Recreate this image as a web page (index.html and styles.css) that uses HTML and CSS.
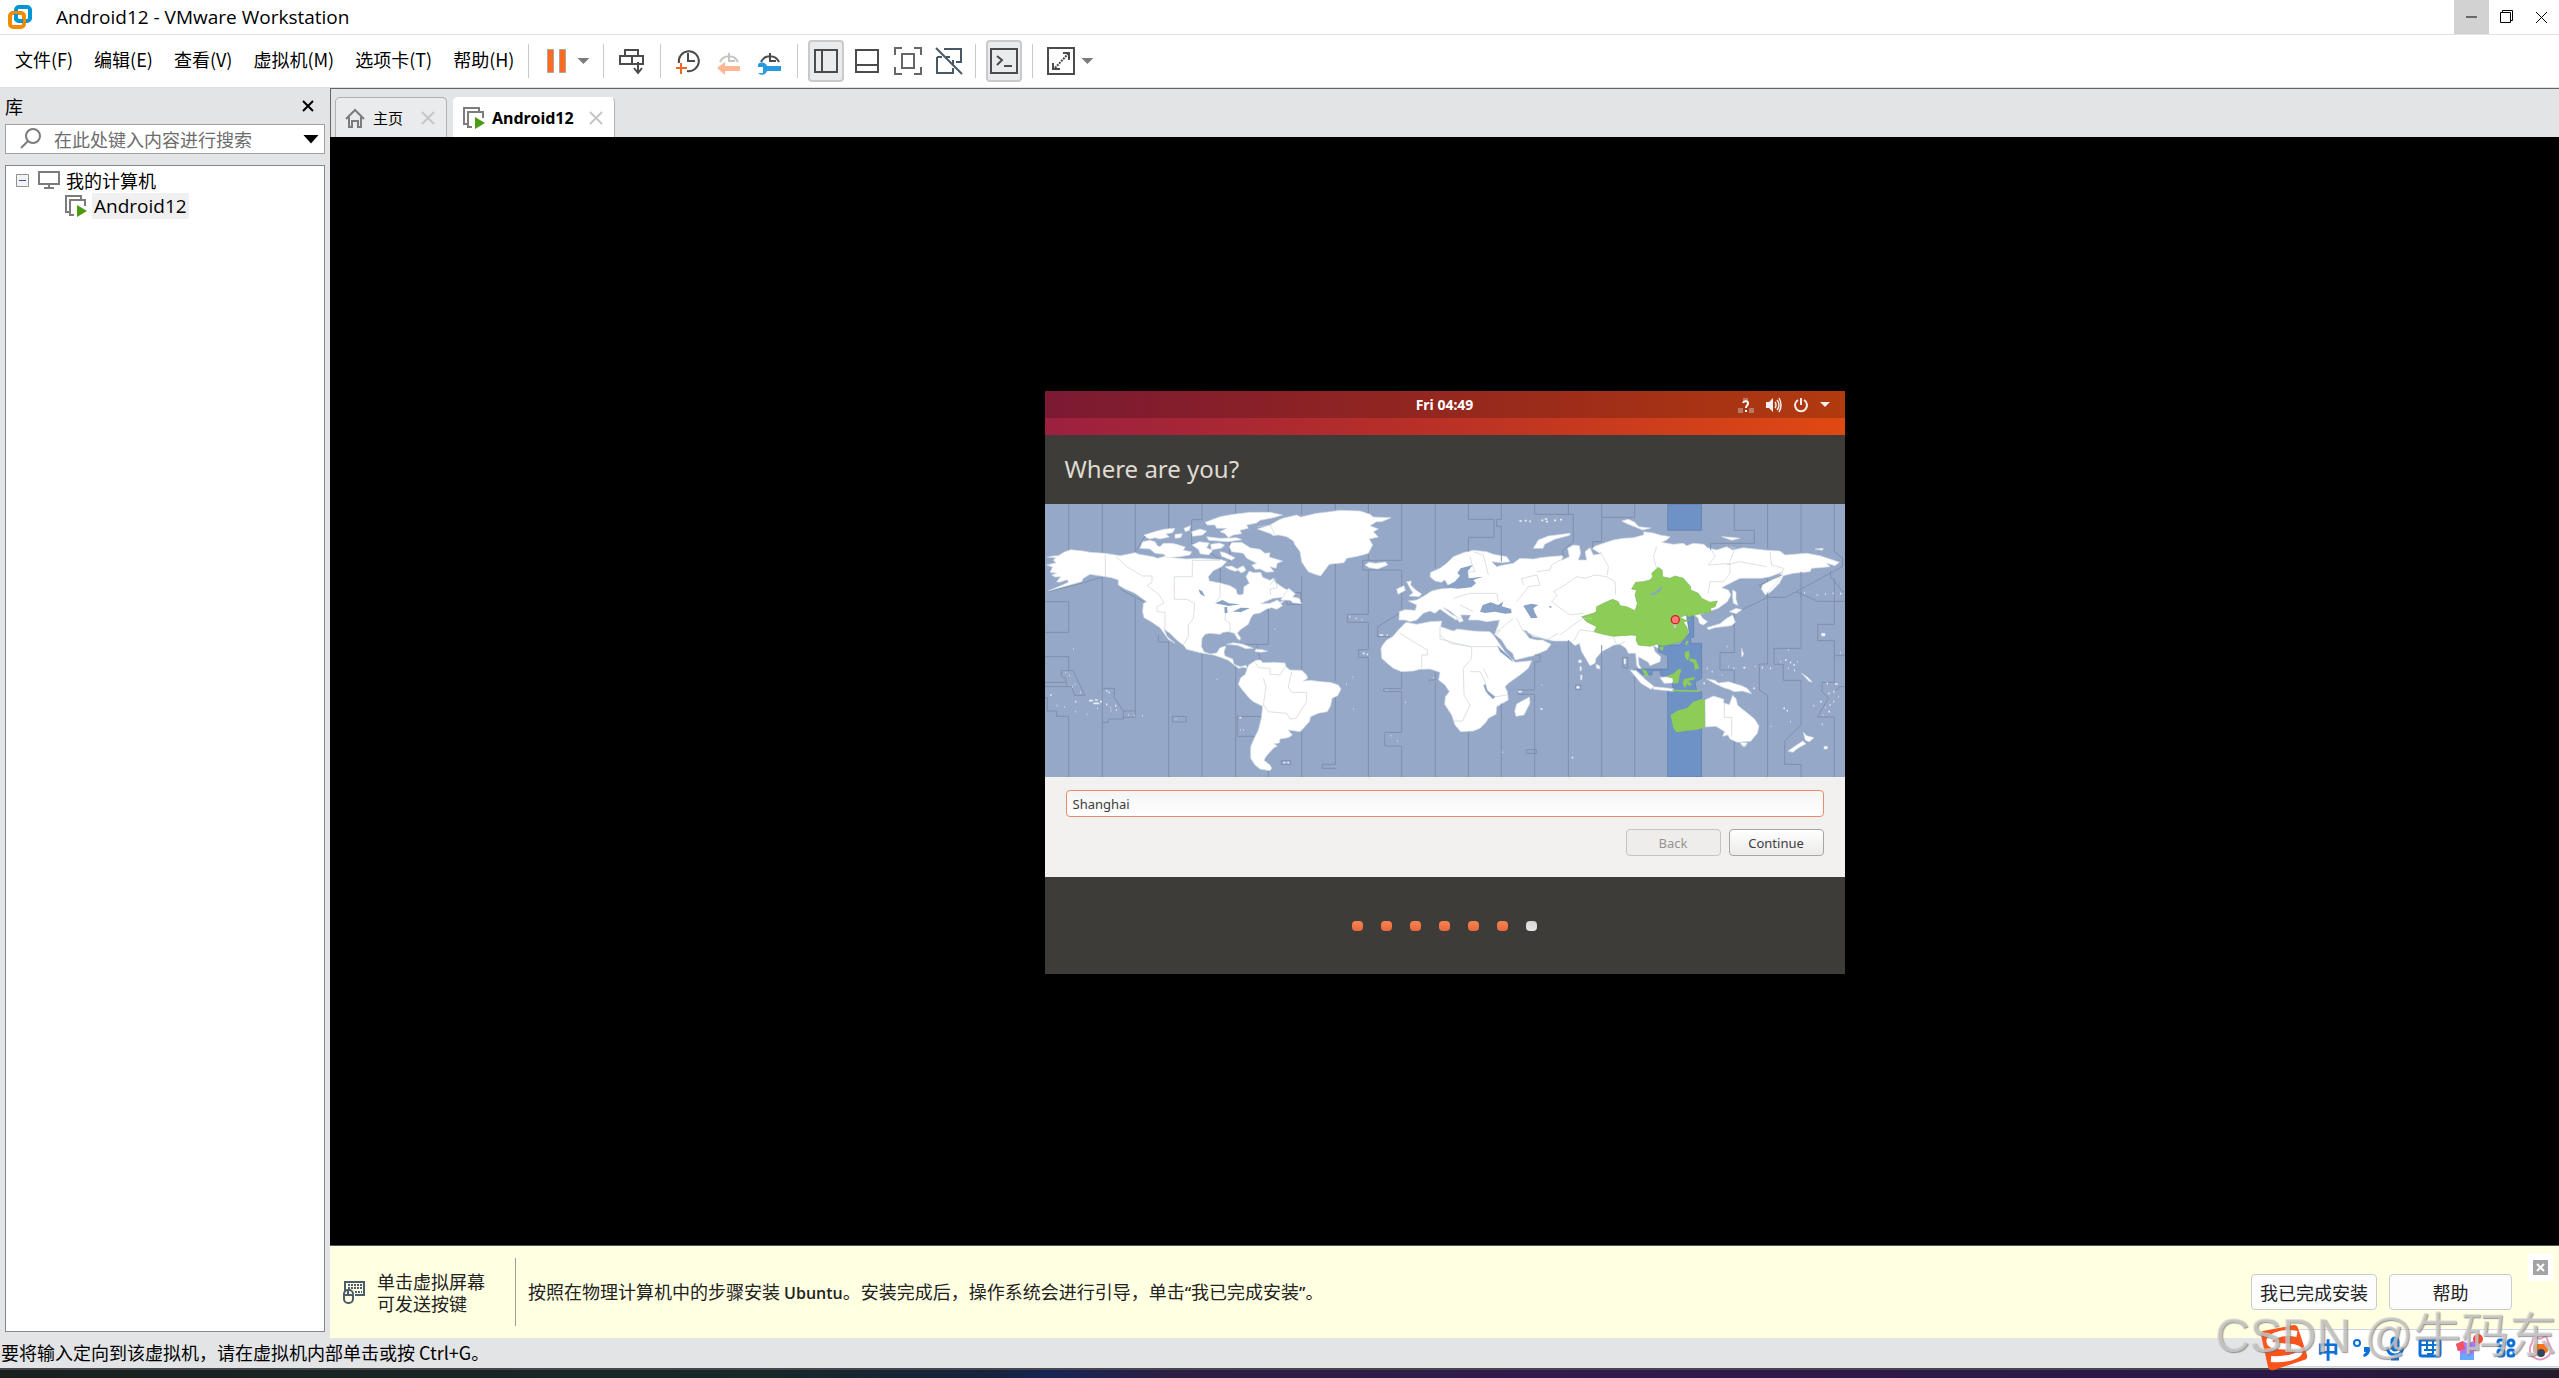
FILE: index.html
```html
<!DOCTYPE html>
<html lang="zh-CN">
<head>
    <meta charset="UTF-8">
    <meta name="viewport" content="width=device-width, initial-scale=1.0">
    <title>Android12 - VMware Workstation</title>
    <link rel="stylesheet" href="styles.css">
</head>
<body>
    <!-- 标题栏 -->
    <header class="title-bar">
        <svg class="app-logo" width="26" height="26" viewBox="0 0 26 26" fill="none" stroke-width="4">
            <rect x="9" y="3" width="14" height="14" rx="3" stroke="#0095d3"/>
            <rect x="3" y="9" width="14" height="14" rx="3" stroke="#f38b00"/>
            <path d="M9 10v4a3 3 0 0 0 3 3h4" stroke="#0095d3"/>
        </svg>
        <h1 class="app-title">Android12 - VMware Workstation</h1>
        <div class="window-controls">
            <button type="button" class="window-btn active" aria-label="最小化">
                <svg width="14" height="14" viewBox="0 0 14 14"><path d="M1 7h11" stroke="#000"/></svg>
            </button>
            <button type="button" class="window-btn" aria-label="还原">
                <svg width="14" height="14" viewBox="0 0 14 14" fill="none" stroke="#000"><path d="M.5 2.500h10v10H.5zM2.500 2.500V.5h10v10h-2"/></svg>
            </button>
            <button type="button" class="window-btn" aria-label="关闭">
                <svg width="14" height="14" viewBox="0 0 14 14"><path d="M1 2l11 11M12 2L1 13" stroke="#000"/></svg>
            </button>
        </div>
    </header>

    <!-- 菜单和工具栏 -->
    <nav class="menu-bar">
        <div class="menus">
            <button type="button">文件(F)</button>
            <button type="button">编辑(E)</button>
            <button type="button">查看(V)</button>
            <button type="button">虚拟机(M)</button>
            <button type="button">选项卡(T)</button>
            <button type="button">帮助(H)</button>
        </div>
        <div class="tool-group">
            <button type="button" class="tool" aria-label="挂起">
                <svg width="28" height="28" viewBox="0 0 28 28" fill="#ff6a1f" stroke="#b0a49c"><path d="M4.500 2.500h6v23h-6zM16.500 2.500h6v23h-6z"/></svg>
            </button>
            <button type="button" class="caret" aria-label="电源选项"></button>
        </div>
        <div class="tool-group">
            <button type="button" class="tool" aria-label="发送按键">
                <svg width="28" height="28" viewBox="0 0 28 28" fill="none" stroke="#4b4b4d" stroke-width="2"><path d="M7 9V3h13v6M2 9h23v8H2zM14 9v8M20 15v10M16 21l4 5 4-5"/></svg>
            </button>
        </div>
        <div class="tool-group snapshots">
            <button type="button" class="tool" aria-label="拍摄快照">
                <svg width="28" height="28" viewBox="0 0 28 28" fill="none" stroke="#4b4b4d" stroke-width="2"><path d="M5 16A10 10 0 1 1 13 24M14 6v8h7"/><path d="M2 21h11M7 16v11" stroke="#f26722"/></svg>
            </button>
            <button type="button" class="tool" aria-label="恢复快照" disabled>
                <svg width="28" height="28" viewBox="0 0 28 28" fill="none" stroke="#c4c4c5" stroke-width="2"><path d="M5 15A10 10 0 0 1 23 15M14 6v8h6"/><path d="M2 21l8-6v4h15v5H10v4z" fill="#ffb693" stroke="none"/></svg>
            </button>
            <button type="button" class="tool" aria-label="管理快照">
                <svg width="28" height="28" viewBox="0 0 28 28" fill="none" stroke="#4b4b4d" stroke-width="2"><path d="M5 15A10 10 0 0 1 23 15M14 6v8h6"/><path d="M2 17c4-3 8-1 9 2h14v5H11c-1 4-6 5-9 2h5v-6H2z" fill="#2a9ae0" stroke="none"/></svg>
            </button>
        </div>
        <div class="tool-group views">
            <button type="button" class="tool pressed" aria-label="显示库">
                <svg width="28" height="28" viewBox="0 0 28 28" fill="none" stroke="#4b4b4d" stroke-width="2"><path d="M3 3h22v22H3zM10 3v22"/></svg>
            </button>
            <button type="button" class="tool" aria-label="显示缩略图">
                <svg width="28" height="28" viewBox="0 0 28 28" fill="none" stroke="#4b4b4d" stroke-width="2"><path d="M3 3h22v22H3zM3 18h22"/></svg>
            </button>
            <button type="button" class="tool" aria-label="全屏">
                <svg width="28" height="28" viewBox="0 0 28 28" fill="none" stroke="#666" stroke-width="2"><path d="M8 7h12v14H8zM1 8V1h7M20 1h7v7M27 20v7h-7M8 27H1v-7"/></svg>
            </button>
            <button type="button" class="tool" aria-label="Unity 模式">
                <svg width="28" height="28" viewBox="0 0 28 28" fill="none" stroke="#485866" stroke-width="2"><path d="M9 2h17v13h-5M15 10h-4M2 10v16h16v-5M2 10h5M18 18v-5"/><path d="M1 1l26 26"/></svg>
            </button>
        </div>
        <div class="tool-group">
            <button type="button" class="tool pressed" aria-label="控制台视图">
                <svg width="28" height="28" viewBox="0 0 28 28" fill="none" stroke="#4b4b4d" stroke-width="2"><path d="M1 2h26v24H1zM7 9l5 4-5 5M14 19h8"/></svg>
            </button>
        </div>
        <div class="tool-group">
            <button type="button" class="tool" aria-label="自由拉伸">
                <svg width="28" height="28" viewBox="0 0 28 28" fill="none" stroke="#4b4b4d" stroke-width="2"><path d="M1 1h26v26H1zM16 6h6v7M6 16v6h7"/><path d="M8 21L21 7" stroke-dasharray="2 1"/></svg>
            </button>
            <button type="button" class="caret" aria-label="拉伸选项"></button>
        </div>
    </nav>

    <div class="workspace">
        <!-- 库 -->
        <aside class="library">
            <div class="library-head">
                <h2>库</h2>
                <button type="button" class="plain-btn" aria-label="关闭库">
                    <svg width="12" height="12" viewBox="0 0 12 12"><path d="M1 1l10 10M11 1L1 11" stroke="#000" stroke-width="2"/></svg>
                </button>
            </div>
            <div class="search-box">
                <svg width="24" height="22" viewBox="0 0 24 22" fill="none" stroke="#7c7c7c" stroke-width="2"><circle cx="14" cy="8" r="7"/><path d="M9 13l-7 7"/></svg>
                <input type="text" placeholder="在此处键入内容进行搜索" aria-label="搜索库">
                <button type="button" class="search-caret" aria-label="搜索选项"></button>
            </div>
            <div class="tree-box">
                <ul class="tree">
                    <li>
                        <div class="tree-row">
                            <svg width="13" height="13" viewBox="0 0 13 13" fill="#f3f3f3" stroke="#919191"><path d="M.5.5h12v12H.5z"/><path d="M3 6.500h7" stroke="#3455a5"/></svg>
                            <svg class="pc-icon" width="22" height="18" viewBox="0 0 22 18" fill="none" stroke="#7c7c7c" stroke-width="2"><path d="M1 1h20v12H1zM11 13v4M6 17h10"/></svg>
                            <span>我的计算机</span>
                        </div>
                        <ul>
                            <li class="tree-row vm-row">
                                <svg width="22" height="22" viewBox="0 0 22 22" fill="none" stroke="#7c7c7c" stroke-width="2"><path d="M4 17H1V1h15v3M9 20H5V5h15v6"/><path d="M12 10l10 6-10 6z" fill="#4a9b12" stroke="none"/></svg>
                                <span class="vm-name">Android12</span>
                            </li>
                        </ul>
                    </li>
                </ul>
            </div>
        </aside>

        <main class="vm-area">
            <div class="tabs" role="tablist">
                <div class="tab">
                    <svg width="20" height="20" viewBox="0 0 20 20" fill="none" stroke="#7c7c7c" stroke-width="2"><path d="M1 11l9-9 9 9M4 9v10h3v-6h6v6h3V9"/></svg>
                    <span role="tab">主页</span>
                    <button type="button" class="plain-btn" aria-label="关闭主页">
                        <svg width="14" height="14" viewBox="0 0 14 14"><path d="M1 1l12 12M13 1L1 13" stroke="#c6c6c6" stroke-width="2"/></svg>
                    </button>
                </div>
                <div class="tab current">
                    <svg width="22" height="22" viewBox="0 0 22 22" fill="none" stroke="#7c7c7c" stroke-width="2"><path d="M4 17H1V1h15v3M9 20H5V5h15v6"/><path d="M12 10l10 6-10 6z" fill="#4a9b12" stroke="none"/></svg>
                    <span role="tab">Android12</span>
                    <button type="button" class="plain-btn" aria-label="关闭 Android12">
                        <svg width="14" height="14" viewBox="0 0 14 14"><path d="M1 1l12 12M13 1L1 13" stroke="#c6c6c6" stroke-width="2"/></svg>
                    </button>
                </div>
            </div>

            <!-- 虚拟机屏幕 -->
            <div class="screen">
                <section class="guest">
                    <div class="guest-wall">
                        <div class="guest-panel">
                            <span class="clock">Fri 04:49</span>
                            <div class="indicators">
                                <svg width="18" height="18" viewBox="0 0 18 18"><path d="M6 2h5v3H6zM1 12h5v5H1zM12 12h5v5h-5z" fill="#b87a66"/><path d="M6 7c1-3 6-2 5 1-1 2-2 2-2 4M9 14v2" fill="none" stroke="#fff" stroke-width="2"/></svg>
                                <svg width="16" height="16" viewBox="0 0 16 16" fill="none" stroke="#f2f0ee" stroke-width="2"><path d="M0 5h3l4-4v14l-4-4H0z" fill="#f2f0ee" stroke="none"/><path d="M9 5q2 3 0 6M11 3q4 5 0 10M13 1q4 7 0 14" stroke-width="1.500"/></svg>
                                <svg width="16" height="16" viewBox="0 0 16 16" fill="none" stroke="#f2f0ee" stroke-width="2"><path d="M5 3a6 6 0 1 0 6 0M8 1v7"/></svg>
                                <svg width="10" height="6" viewBox="0 0 10 6"><path d="M0 0h10L5 5z" fill="#f2f0ee"/></svg>
                            </div>
                        </div>
                    </div>
                    <h2 class="guest-title"><label for="city">Where are you?</label></h2>

                    <!-- 时区地图 -->
                    <svg class="map" viewBox="0 0 2400 819" role="img" aria-label="时区地图">
                        <path fill="#95a8c8" d="M0 0h2400v819H0z"/>
                        <g transform="translate(-15 -357)">
                            <g class="zone-lines">
                                <path d="M86 357V500M86 650V742M86 815V856M86 994V1176M187 357V505M187 575V910M187 1012V1176M286 357V500L318 448 386 430V357M286 640V978H250M386 770V1176M386 430V357M486 357V404H455V475L541 522V600M486 805V1176M569 390V530M587 357V390M587 845V1176M685 357V382M685 670V778H565M685 1155V1176M785 357V388M785 573V860M785 1040V1176M886 357V376M886 530V888M886 930V1138H847V1150H890M985 357V390M985 505V526H968V555H1085V680M985 555V688H922V712H985V794H956V817H985V1176M1085 357V526H985M1085 860V911H1031V920H1085V1042H1034V1083H1085V1176M1186 357V550M1186 862V885H1168V889M1186 889V1176"/>
                                <path d="M15 650H86M15 742H86M15 815H86M64 857H99L135 931H104L95 905 80 905 77 880 64 874zM15 892H80M15 905H80M15 938H22V978H50V994H86M187 910H223V938L250 978V1002H205V1012H187V910M250 997H286V978M397 994H439V1011H397zM25 620L120 596 195 574M242 613L320 655M355 750V771H386M592 994H664M592 994V1054H645M724 1127H752V1138H724zM1013 725L1085 681M1013 725V755H1050M740 640V658H783V623H765M650 778L661 825"/>
                            </g>
                            <g class="land">
                                <!-- 北美洲 -->
                                <path d="M20 540L48 533 40 526 47 518 22 517 38 513 55 512 73 501 92 494 108 496 130 498 150 502 195 505 240 512 256 509 285 503 297 508 340 515 352 520 380 512 400 518 440 522 480 520 545 524 560 530 545 545 520 557 505 575 508 588 540 594 570 602 588 613 592 628 600 630 610 627 612 605 628 595 618 575 628 558 640 563 662 562 668 577 690 586 700 580 706 592 722 603 735 612 750 615 762 630 740 636 700 640 680 648 662 656 690 655 712 645 720 652 735 643 722 657 728 662 710 673 695 668 680 672 660 684 640 688 632 700 625 718 600 735 592 745 602 758 600 766 593 762 583 745 565 740 550 742 540 748 510 745 495 748 486 760 484 784 492 800 510 807 530 804 540 788 558 783 552 800 555 813 578 822 582 838 600 845 618 841 622 850 610 847 596 850 580 838 565 826 550 820 520 810 480 803 440 793 432 782 410 765 388 743 372 733 382 755 405 775 385 763 360 728 330 708 312 698 308 680 310 655 320 650 295 632 285 625 255 612 235 600 235 585 215 578 195 575 150 568 130 580 125 590 100 597 60 608 25 618 60 603 85 592 82 584 58 592 50 590 62 575 45 576 35 570 50 565 30 562 38 547z"/>
                                <path d="M300 490L308 470 330 466 345 470 352 482 360 485 370 475 395 475 410 478 436 486 430 496 455 500 450 510 420 515 380 518 372 508 345 505 330 492zM312 450L350 438 375 432 405 430 398 443 378 446 388 456 360 462 345 458 330 462 320 458zM405 448l22-2-5 12-17 2zM432 430l20-8-4 14-12 4zM455 440l25-8 20 6-12 12-30 4zM495 412L540 395 580 388 630 382 690 382 728 390 700 398 660 406 650 414 620 420 625 430 600 436 605 446 580 450 565 458 555 446 540 440 560 430 530 430 525 420 502 420zM456 480l22-10 30 4-8 14 18 8-12 14-26-4-4-12zM512 478l26-4 16 6-10 10-30 4zM500 455l40 5 50-2 16 6-40 6-60-4zM568 485L575 473 605 472 630 488 660 493 675 505 690 503 688 516 728 528 712 535 708 550 690 545 702 560 680 562 660 552 645 553 635 540 650 535 620 520 610 505 575 500zM555 545l20-2 22 12-12 4-18-6zM590 552l20-10 8 14-14 8zM540 500l15 3 30 15-10 8-30-12z"/>
                                <path d="M652 432L690 420 716 405 728 400 770 390 782 396 830 385 870 380 900 376 960 378 990 388 1000 396 1053 398 1025 410 1010 410 990 422 1015 432 1000 440 1015 456 988 462 998 480 985 505 960 512 930 518 920 520 912 533 868 538 855 555 842 573 825 568 805 560 795 546 785 530 780 500 765 480 760 468 740 455 715 450 700 452 692 446 675 440z"/>
                                <path d="M975 540l12-8 20 3 30-4 6 9-30 12-25-4zM560 778l20-5 30 5 30 12-22 1-25-10zM648 792l20 2 15 5-20 3-18-2zM722 645l24-35 20 16-8 10 20 4 6 16-25-3-8-7z"/>
                                <!-- 南美洲 -->
                                <path d="M622 850L626 840 648 826 662 825 668 833 700 832 735 834 738 845 750 855 785 856 800 870 803 880 790 888 810 886 845 890 870 892 895 900 903 912 893 932 876 940 872 962 862 980 835 985 812 995 808 1010 790 1030 780 1040 745 1035 757 1050 745 1058 720 1062 718 1074 702 1076 712 1083 700 1090 688 1103 678 1115 672 1126 690 1140 695 1150 690 1157 660 1152 645 1140 632 1120 632 1085 645 1055 655 1035 664 1000 668 964 640 950 628 940 605 912 595 898 602 878 616 868z"/>
                                <!-- 非洲 -->
                                <path d="M1098 712L1130 718 1170 710 1205 708 1202 725 1240 738 1252 732 1300 738 1350 740 1360 750 1395 800 1418 824 1425 832 1475 827 1465 850 1440 870 1405 895 1395 905 1402 920 1405 945 1370 965 1368 988 1345 1000 1338 1012 1320 1030 1300 1038 1262 1040 1245 1020 1235 990 1214 958 1216 935 1228 920 1215 900 1196 885 1200 862 1170 852 1140 853 1120 858 1085 860 1060 850 1045 838 1025 820 1023 790 1028 780 1040 765 1058 755 1075 735z"/>
                                <!-- 欧亚大陆 -->
                                <path d="M1078 680L1095 674 1126 676 1130 660 1105 648 1130 645 1152 633 1175 618 1200 612 1240 608 1275 606 1255 590 1235 600 1225 602 1215 585 1205 592 1185 588 1170 575 1172 562 1200 550 1220 535 1240 515 1270 503 1300 496 1340 500 1360 508 1400 515 1410 530 1385 533 1355 530 1370 545 1390 540 1420 535 1440 520 1480 522 1500 518 1540 514 1570 512 1565 526 1588 515 1583 490 1600 480 1618 482 1622 505 1615 525 1640 525 1635 500 1650 488 1660 510 1682 506 1655 490 1668 482 1690 475 1720 465 1750 460 1780 458 1810 450 1812 440 1840 444 1860 450 1890 455 1880 465 1865 472 1900 478 1930 475 1940 482 1960 475 1992 478 2002 488 2030 495 2060 485 2078 495 2110 488 2180 496 2220 498 2235 510 2300 505 2340 512 2370 522 2398 532 2385 542 2360 535 2370 545 2340 548 2315 550 2310 560 2260 565 2230 572 2218 595 2195 618 2178 630 2170 605 2180 590 2218 572 2225 562 2190 575 2165 580 2100 580 2060 600 2045 608 2065 615 2073 630 2062 650 2035 670 2010 678 1980 688 1988 700 2003 710 1990 720 1978 715 1975 700 1962 690 1940 695 1948 740 1925 765 1870 783 1855 790 1840 782 1845 800 1862 815 1860 830 1830 842 1825 832 1795 815 1797 840 1810 858 1825 870 1812 872 1798 855 1790 840 1787 805 1765 805 1758 790 1740 778 1722 780 1685 800 1668 820 1665 835 1650 842 1640 825 1625 800 1618 775 1605 782 1590 768 1540 768 1500 758 1480 755 1460 738 1450 735 1468 760 1490 765 1508 765 1533 778 1520 795 1480 812 1425 825 1418 805 1400 790 1385 765 1364 748 1375 720 1378 705 1340 710 1315 705 1285 705 1292 690 1262 690 1270 708 1258 712 1245 690 1225 675 1210 668 1235 688 1262 700 1248 705 1225 690 1200 672 1185 685 1170 678 1150 685 1130 705 1110 710 1095 705 1077 705z"/>
                                <path d="M1100 590l14-2-2 12 15 15 18 12-8 8-30-2 12-10-8-12zM1070 612l22-10 4 14-22 12z"/>
                            </g>
                            <g class="water">
                                <path d="M475 613l12 6 8 16-14-8zM525 655l22-10 20 10 34 3-35 5zM553 667l8-2 2 18-9 2zM578 680l24-12 28 1-26 12z"/>
                            </g>
                            <path class="borders" d="M196 507V575M228 515L260 545 308 573H336V592L322 602 358 630 372 655 350 665 352 680 375 682V740M541 526H457V575H403V643H440L464 655 460 700 445 720V755L430 780M540 598V635L528 650M557 685L555 705 570 715V740M690 600L705 580 712 608 690 612 692 630M645 832L655 848 690 850 690 868 720 870 735 845M670 880L678 905 670 960 685 980 740 985 750 1002 768 1000 800 950V922H755L745 905 755 860M1080 745L1162 795V810H1145V850M1200 725V762L1290 785H1380M1295 785V820L1270 850 1272 930 1290 960 1268 1008H1240M1290 860H1320L1335 890 1345 930 1370 935 1400 930M1330 850L1345 880M652 425L690 420 705 450"/>
                        </g>
                        <g transform="translate(1185 -357)">
                            <g class="zone-lines">
                                <path d="M85 357V403H162V457H85V500M184 357V403H170V424H184V530M284 357V388H400V470L368 497 370 515M385 357V388M485 357V397H584V357M485 397V470H458V490M85 1040V1176M184 955V1176M284 810H300V830H284V915H235V928H284V1176M385 765V1176M485 780V1176M584 850V1176M548 817H563V850L548 846zM883 357V436H943V475H812V495M983 357V490M983 580V837H958V915L983 932V1176M1083 357V500M1083 560V640M1183 357V500L1208 520 1207 545 1037 637H983L958 600 1025 570M1183 580V718H1133V767H1183V812H1215M883 685L983 637M883 680V803H840V855H883V905M883 1060V1176M1083 620V790H1002V838H1030V886H1083V1020L1034 1068V1138H1083V1176M1068 620L1133 649H1215M1172 557V575L1210 622M1183 812V892H1146V920L1165 940 1132 996H1183V1176M1183 920L1200 905H1215M260 1094H289V1105H260zM407 900H422V914H407z"/>
                            </g>
                            <path fill="#6e91c6" stroke="#5f7ba8" stroke-width="2" d="M683 357H785V436H683zM740 690H761V757H752V775H785V880L765 890 770 920H785V1176H683V915L700 908 690 880 662 870V857H636V870H610L590 852H683V812L656 800V780H720L748 745z"/>
                            <g class="land">
                                <path d="M280 490l15-25 30-12 65-8-1 6-45 12-30 15-5 12zM545 408l20-5 18 8 14 14 36 4-25 6-50-20zM845 455l30 2 25 3-25 6zM968 600l-4 12 12 18 12-14 35-40-25 8zM878 615l10 6v22l6 18-14-6-2-20zM868 680l20-10 18 4-18 12zM878 690l8 22-12 10-50 6-18 6-6-6 40-12 20-16zM1125 492l25-2-3 6z"/>
                                <!-- 南亚和大洋洲 -->
                                <path d="M570 855l18 2 30 28 25 20-10 8-30-18zM640 905l20 2 40 4v8l-60-6zM660 878l22-3 20 5-5 14-25 1zM800 882l25 4 10 8 30-4 40 12 16 8 14 16-28-8-26 2-10-6-20-6-26-12zM795 945l25-12 32 10-2 10 18 6 10-28 10 10 5 20 25 20 25 20 14 22-5 22-20 24-40 3-22-10-6-12-16 4 6-14-26-16-32 2zM900 1072l22 2-6 10h-8zM1090 1042l10 10 22 6-14 12-12-4zM1088 1068l10 8-22 12-18 14-14-4zM268 936l2 18-18 36-24 4-4-15 6-22zM468 838l10 4 2 10-10-2z"/>
                                <path d="M416 825h8v8h-8zM420 845h4v12h-4zM422 870h4v14h-4zM410 904h8v6h-8zM552 822h5v14h-5zM905 790l6 18-6 8zM1085 865l18 12 14 14-10-2zM1145 745h10v8h-10zM1152 1084h10v8h-10zM235 918h10v4h-10zM302 970h5v4h-5z"/>
                            </g>
                            <path fill="#8ccd57" stroke="#7fb65c" stroke-width="2" d="M425 695L450 688 468 682 470 665 490 655 518 643 535 650 540 662 560 665 585 677 592 655 585 630 590 615 575 612 587 592 610 590 630 585 638 575 635 565 655 547 667 556 667 575 690 580 705 573 730 580 752 605 752 615 775 625 785 640 810 652 832 648 825 665 812 670 812 682 790 684 745 695 740 690 720 697 735 705 750 704 730 712 740 725 745 740 735 760 715 772 690 778 668 783 650 778 630 784 595 780 588 765 590 752 575 750 545 752 520 754 490 748 462 740 470 725 440 710z"/>
                            <path fill="#8ccd57" d="M660 785l12 2-5 10-8-4zM738 768l8 0-6 14-4-4zM735 800l12-2 2 15-6 14-8-10zM748 820l20 4 10 26-14 4-2-20-14-6zM604 852l14 4 10 20-12-4zM675 875l24-8 18-16 8 4-6 14-4 25-14 2-4-16zM732 882l34-6-4 8-18 4 12 10-8 6-6-8-8 14-6-16zM695 914l84 2v5l-80-2zM692 990L710 978 742 968 760 950 785 942 794 946V1028L765 1035 735 1038 710 1042 700 1030z"/>
                            <g class="water">
                                <path d="M120 680l8-20 24-8 22 8 16-10-5 14 28 8 2 12-20 2-30-6-30 4zM250 662l25-6 20 4-15 10 5 14 8 14-20 2-12-20zM8 584l12 18 24-12 16-18-8-8 10-14 36-10-14 18 2 22 44-5-30 10 8 10-14 12-40 4-42-4zM628 628l22-10 16-14-2 12-24 14zM180 800l-8-18 40 36 8 14zM325 664l10 0-2 6zM130 900l6-2 6 18 24 20-8 6-20-22z"/>
                            </g>
                            <path class="borders" d="M90 515L95 535 105 560 80 562M100 500L130 510 138 540 145 570M40 640L90 625H170L175 650M60 660L100 680M250 600L245 580 290 570 300 600 265 605 250 625 230 650M290 560L330 555 335 540 370 520M340 620L375 600 410 575 435 580 465 570 500 575 525 590 527 630M480 500L505 545 502 570M340 620L352 630 335 650 355 665 390 690 430 685M360 750L400 720 430 700 455 700M400 770L420 735 465 740M230 700L250 740 320 765 355 745M520 755L530 780 555 770M650 485L640 515 650 550M815 495L825 515 805 540 870 535V565L850 590 810 590 805 625M870 485L885 490 870 530M990 500L995 540 1030 550 1025 575M860 540L900 530 980 545M853 950V997H875V1055M165 745L220 700M170 750L180 735M0 750L30 775 90 785"/>
                            <g class="islands">
                                <path d="M845 870h2M865 845h2M880 850h3M910 848h6M945 845h2M965 848h4M990 850h3M1020 830h2M1035 825h5M1050 832h4M1045 850h2M1060 840h5M1062 856h3M1072 830h2M1045 795h2M1200 803h2M1160 895h4M1185 897h8M1165 925h4M1120 962h3M1140 950h5M1155 968h2M1165 980h5M1148 990h2M1180 920h4M1195 935h2M1145 1018h3M1050 1010h2M1092 624h3M1130 630h3M1155 627h3M1178 625h3M1200 626h4M800 850h3M815 860h3M790 895h5M940 910h5M1030 970h5M1040 977h4M992 1024h2M395 1118h5M187 1102h2M305 900h2M1180 950h3M1168 960h4M860 785h2M238 408h8M254 407h6M268 409h5M304 406h6M314 402h8M318 410h6M342 406h6M360 404h6"/>
                            </g>
                        </g>
                        <g class="islands" transform="translate(-15 -357)">
                            <path d="M75 862h2M88 872h2M104 898h2M97 905h2M120 922h2M198 918h4M205 922h4M30 930h5M50 962h2M72 966h2M105 950h4M105 980h2M140 988h2M147 947h12M165 945h8M160 955h18M180 950h6M172 970h2M198 958h4M210 968h2M225 962h4M228 975h3M212 977h2M265 990h2M282 992h2M306 992h2M407 1003h2M530 883h2M704 732h2M100 792h2M928 695h3M947 700h3M965 704h2M968 805h6M980 808h4M1018 750h12M1040 750h4M938 876h2M918 898h2M940 972h2M1095 952h2M1040 915h2M1052 1052h2M1071 1068h2M598 998h6M600 1035h2M610 1035h2M730 1133h6M742 1133h6M1180 878h2"/>
                        </g>
                        <path d="M1890 352v20" stroke="#c9c9c9" stroke-width="7"/>
                        <circle cx="1891" cy="347" r="12" fill="#ff7b7b" stroke="#cf1f1f" stroke-width="4"/>
                    </svg>

                    <form class="guest-form">
                        <input type="text" id="city" value="Shanghai">
                        <div class="guest-actions">
                            <button type="button" disabled>Back</button>
                            <button type="button">Continue</button>
                        </div>
                    </form>
                    <div class="steps">
                        <i></i><i></i><i></i><i></i><i></i><i></i><i class="last"></i>
                    </div>
                </section>
            </div>

            <!-- 安装提示 -->
            <div class="hint-bar">
                <svg width="24" height="24" viewBox="0 0 24 24" fill="none" stroke="#4c5d6b" stroke-width="2"><path d="M3 11V2h19v13h-9"/><path d="M6 5h14M6 8h14M13 12h7" stroke-dasharray="2 1"/><rect x="2" y="10" width="9" height="13" rx="4" fill="#ffffe1"/><path d="M2 15h9M6 10v5"/></svg>
                <p class="hint-keys">单击虚拟屏幕<br>可发送按键</p>
                <p class="hint-text">按照在物理计算机中的步骤安装 <b>Ubuntu</b>。安装完成后，操作系统会进行引导，单击<b>“</b>我已完成安装<b>”</b>。</p>
                <div class="hint-actions">
                    <button type="button">我已完成安装</button>
                    <button type="button">帮助</button>
                </div>
                <button type="button" class="hint-close" aria-label="关闭提示">
                    <svg width="15" height="15" viewBox="0 0 15 15"><rect width="15" height="15" rx="1" fill="#a3a3a3"/><path d="M4 4l7 7M11 4l-7 7" stroke="#fff" stroke-width="2"/></svg>
                </button>
            </div>
        </main>
    </div>

    <footer class="status-bar">要将输入定向到该虚拟机，请在虚拟机内部单击或按 Ctrl+G。</footer>
    <div class="taskbar-edge"></div>

    <!-- 输入法工具条 -->
    <div class="ime-bar">
        <svg class="ime-logo" width="48" height="46" viewBox="0 0 48 46"><path d="M1 10Q0 7 3 6L34 0q3 0 4 3l9 27q1 4-3 5L14 45q-5 1-6-3z" fill="#f9541c"/><path d="M37 9C22 6 6 12 10 18s26 1 29 7-12 10-28 9" fill="none" stroke="#fff" stroke-width="6"/></svg>
        <span class="ime-mode">中</span>
        <svg width="20" height="20" viewBox="0 0 20 20" fill="none" stroke="#0b6fd8" stroke-width="2"><circle cx="5" cy="5" r="3"/><path d="M12 9h6q1 8-6 10l-1-2 3-3h-2z" fill="#0b6fd8" stroke="none"/></svg>
        <svg width="20" height="26" viewBox="0 0 20 26" fill="none" stroke="#0b6fd8" stroke-width="3"><rect x="7" y="3" width="6" height="12" rx="3" fill="#0b6fd8"/><path d="M2 12q1 8 8 8t8-8M6 24h8"/></svg>
        <svg width="24" height="20" viewBox="0 0 24 20" fill="none" stroke="#0b6fd8" stroke-width="2"><rect x="2" y="2" width="20" height="16" rx="2" stroke-width="3"/><path d="M2 7h20M6 12h12M9 2v10M15 2v14M9 16h6"/></svg>
        <svg width="28" height="28" viewBox="0 0 28 28"><path d="M1 10l7-3q5 4 10 0l5 3-2 7h-2v9H5V17H3z" fill="#a77bf5"/><path d="M1 10l7-3 2 8-7 2z" fill="#f6515c"/><path d="M5 20h14v6H5z" fill="#69a8ff"/><circle cx="23" cy="5" r="5" fill="#fa4a36"/></svg>
        <svg width="20" height="20" viewBox="0 0 20 20" fill="none" stroke="#0b6fd8" stroke-width="3"><rect x="2" y="2" width="6" height="6" rx="2"/><rect x="12" y="2" width="6" height="6" rx="3"/><rect x="2" y="12" width="6" height="6" rx="2"/><rect x="12" y="12" width="6" height="6" rx="2"/></svg>
        <svg width="24" height="26" viewBox="0 0 24 26"><path d="M3 8L5 1l6 3 6-3 3 8q5 8-2 13-7 5-14 0-6-6-1-14z" fill="#fff" stroke="#e99abf" stroke-width="2"/><rect x="4" y="9" width="15" height="9" rx="3" fill="#ff7414"/><circle cx="12" cy="18" r="4" fill="#36435c"/></svg>
    </div>
    <div class="watermark">CSDN @牛码东</div>
</body>
</html>
```
FILE: styles.css
```css
* {
    box-sizing: border-box;
}

body {
    display: flex;
    flex-direction: column;
    position: relative;
    height: 100vh;
    margin: 0;
    overflow: hidden;
    background-color: #e3e4e6;
    color: #000;
    font-family: "Noto Sans CJK SC", sans-serif;
    font-size: 18px;
    line-height: 26px;
}

button,
input {
    font: inherit;
    color: inherit;
}

button {
    padding: 0;
    border: none;
    background: none;
}

svg {
    display: block;
    flex: none;
}

h1, h2, p, ul {
    margin: 0;
    padding: 0;
    font-weight: normal;
    font-size: inherit;
}

ul {
    list-style: none;
}

/* 标题栏 */
.title-bar {
    display: flex;
    align-items: center;
    height: 35px;
    padding-left: 7px;
    border-bottom: 1px solid #e0e1e3;
    background-color: #fff;
}

.app-title {
    flex: 1;
    margin-left: 23px;
    font-family: "Open Sans", sans-serif;
    font-size: 19px;
}

.window-controls {
    display: flex;
    align-self: stretch;
}

.window-btn {
    display: flex;
    align-items: center;
    justify-content: center;
    width: 35px;
}

.window-btn.active {
    background-color: #d2d2d2;
}

/* 菜单和工具栏 */
.menu-bar {
    display: flex;
    align-items: center;
    height: 53px;
    padding-left: 15px;
    border-bottom: 1px solid #e0e1e3;
    background-color: #fff;
}

.menus {
    display: flex;
    gap: 21px;
    margin-right: 14px;
    padding-bottom: 4px;
}

.tool-group {
    display: flex;
    align-items: center;
    height: 34px;
    padding: 0 14px;
    border-left: 1px solid #c8c8c8;
}

.tool-group.snapshots {
    gap: 13px;
    padding: 0 13px;
}

.tool-group.views {
    gap: 5px;
    padding: 0 8px 0 10px;
}

.tool {
    display: flex;
    align-items: center;
    justify-content: center;
    min-width: 28px;
    height: 42px;
}

.views .tool {
    width: 36px;
}

.tool.pressed {
    width: 36px;
    border: 2px solid #c9cacb;
    border-radius: 4px;
    background-color: #eaebec;
}

.tool-group:has(> .tool.pressed:only-child) {
    padding: 0 10px;
}

.caret {
    width: 12px;
    height: 6px;
    margin-left: 6px;
    background-color: #7c7c7c;
    clip-path: polygon(0 0, 100% 0, 50% 100%);
}

/* 库 */
.workspace {
    display: flex;
    flex: 1;
    min-height: 0;
}

.library {
    display: flex;
    flex-direction: column;
    width: 330px;
    padding: 0 5px 6px;
}

.library-head {
    display: flex;
    align-items: center;
    justify-content: space-between;
    height: 36px;
    padding-right: 11px;
}

.plain-btn {
    display: flex;
}

.search-box {
    display: flex;
    align-items: center;
    height: 30px;
    margin-bottom: 11px;
    padding: 0 5px 0 13px;
    border: 1px solid #a0a0a0;
    background-color: #fff;
}

.search-box input {
    flex: 1;
    min-width: 0;
    padding: 0;
    margin-left: 11px;
    border: none;
    outline: none;
}

.search-box input::placeholder {
    color: #6d6d6d;
}

.search-caret {
    width: 16px;
    height: 9px;
    background-color: #000;
    clip-path: polygon(0 0, 100% 0, 50% 100%);
}

.tree-box {
    flex: 1;
    padding: 1px 10px;
    border: 1px solid #828790;
    background-color: #fff;
}

.tree-row {
    display: flex;
    align-items: center;
}

.pc-icon {
    margin: 0 6px 0 9px;
}

.vm-row {
    gap: 5px;
    padding-left: 49px;
}

.vm-name {
    padding: 0 2px;
    background-color: #f0f0f0;
    font-family: "Open Sans", sans-serif;
    font-size: 19px;
}

/* 选项卡 */
.vm-area {
    display: flex;
    flex: 1;
    flex-direction: column;
    min-width: 0;
}

.tabs {
    display: flex;
    align-items: flex-end;
    gap: 6px;
    height: 49px;
    padding-left: 4px;
    border-top: 1px solid #666;
    border-left: 1px solid #666;
}

.tab {
    display: flex;
    align-items: center;
    height: 40px;
    padding: 0 11px 0 9px;
    border: 1px solid #b0b1b3;
    border-bottom: none;
    border-radius: 5px 5px 0 0;
    background-color: #eaebec;
    font-size: 15px;
}

.tab span {
    margin: 0 18px 0 8px;
}

.tab.current {
    border-color: #fff #b0b1b3 #fff #fff;
    background-color: #fff;
    font-family: "Noto Sans", sans-serif;
    font-size: 16px;
    font-weight: bold;
}

.tab.current span {
    margin: 0 15px 0 7px;
}

/* 虚拟机屏幕 */
.screen {
    display: flex;
    flex: 1;
    align-items: center;
    justify-content: center;
    min-height: 0;
    padding-bottom: 17px;
    background-color: #000;
}

.guest {
    width: 800px;
    background-color: #3e3c38;
    color: #3c3c3c;
    font-family: "Noto Sans", sans-serif;
    font-size: 13px;
}

.guest-wall {
    height: 44px;
    background-image: linear-gradient(90deg, #9c2040, #b62f28 45%, #df4912);
}

.guest-panel {
    display: grid;
    grid-template-columns: 1fr auto 1fr;
    align-items: center;
    height: 27px;
    background-color: rgba(0, 0, 0, 0.2);
    color: #fff;
}

.clock {
    grid-column: 2;
    font-size: 14px;
    font-weight: bold;
}

.indicators {
    display: flex;
    align-items: center;
    justify-content: flex-end;
    gap: 11px;
    padding-right: 15px;
}

.guest-title {
    padding: 14px 20px 15px;
    border-radius: 5px 5px 0 0;
    background-color: #3e3c38;
    color: #dfdbd2;
    font-size: 24px;
    line-height: 40px;
}

.map {
    width: 100%;
}

.zone-lines {
    fill: none;
    stroke: #7f90ab;
    stroke-width: 3;
}

.land {
    fill: #fff;
    stroke: #d5dde4;
    stroke-width: 2;
    stroke-linejoin: round;
}

.water {
    fill: #8aa2c5;
}

.borders {
    fill: none;
    stroke: #c9d1d1;
    stroke-width: 2;
}

.islands {
    fill: none;
    stroke: #e8eef5;
    stroke-width: 5;
}

.guest-form {
    height: 100px;
    padding: 13px 21px;
    background-color: #f2f1ef;
}

.guest-form input {
    display: block;
    width: 100%;
    height: 27px;
    padding: 0 6px;
    border: 1px solid #e58c69;
    border-radius: 4px;
    outline: none;
    background-image: linear-gradient(#f4f4f4, #fff);
}

.guest-actions {
    display: flex;
    justify-content: flex-end;
    gap: 8px;
    margin-top: 12px;
}

.guest-actions button {
    width: 95px;
    height: 27px;
    border: 1px solid #a8a6a2;
    border-radius: 4px;
    background-image: linear-gradient(#fff, #ecebe9);
}

.guest-actions button:disabled {
    border-color: #c5c4c2;
    background-image: none;
    background-color: #eeedec;
    color: #96938f;
}

.steps {
    display: flex;
    align-items: center;
    justify-content: center;
    gap: 18px;
    height: 97px;
}

.steps i {
    width: 11px;
    height: 10px;
    border-radius: 4px;
    background-image: linear-gradient(#fa8452, #e7683a);
}

.steps .last {
    background-image: linear-gradient(#d6d6d6, #e6e6e6);
}

/* 安装提示 */
.hint-bar {
    display: flex;
    align-items: center;
    position: relative;
    height: 93px;
    padding: 0 47px 0 12px;
    border-top: 1px solid #555;
    background-color: #ffffe1;
    color: #222;
    line-height: 22px;
}

.hint-keys {
    margin-left: 11px;
    padding-right: 30px;
}

.hint-text {
    flex: 1;
    padding: 22px 0 22px 12px;
    border-left: 1px solid #9c9c9c;
}

.hint-text b {
    font-family: "Open Sans", sans-serif;
    font-weight: 600;
    font-size: 16px;
}

.hint-actions {
    display: flex;
    gap: 12px;
}

.hint-actions button {
    min-width: 123px;
    height: 36px;
    padding: 0 8px;
    border: 1px solid #ccc;
    border-radius: 4px;
    background-color: #fdfdfd;
}

.hint-close {
    display: flex;
    align-items: center;
    justify-content: center;
    position: absolute;
    top: 8px;
    right: 6px;
    width: 25px;
    height: 27px;
    background-color: #fff;
}

/* 状态栏 */
.status-bar {
    height: 30px;
    padding-left: 1px;
    line-height: 28px;
}

.taskbar-edge {
    height: 10px;
    border-top: 2px solid #45464c;
    background-image: linear-gradient(90deg, #1a2020, #162829 30%, #15233f 39%, #182454 41%, #2c1d43 46%, #321a4c 60%, #2b1745 90%, #241a2d);
}

/* 输入法工具条 */
.ime-bar {
    display: flex;
    align-items: center;
    gap: 13px;
    position: absolute;
    right: 0;
    bottom: 11px;
    height: 38px;
    padding-right: 6px;
    border: 1px solid #ccd4e4;
    border-width: 1px 0;
    background-color: #fff;
}

.ime-logo {
    margin: 0 -4px 0 -24px;
}

.ime-mode {
    color: #0b6fd8;
    font-size: 22px;
    font-weight: bold;
}

/* 水印 */
.watermark {
    position: absolute;
    right: 2px;
    bottom: 14px;
    color: rgba(215, 215, 215, 0.7);
    font-family: "Liberation Sans", "Noto Sans CJK SC", sans-serif;
    font-size: 48px;
    line-height: 56px;
    text-shadow: 1px 1px 1px rgba(110, 110, 110, 0.7);
}
```
